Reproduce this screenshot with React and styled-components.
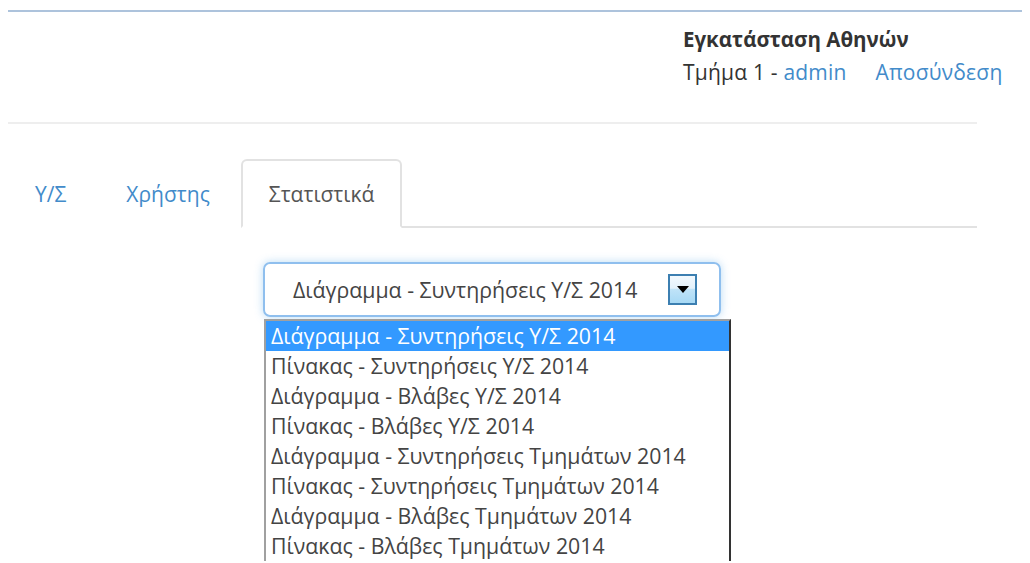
import React, { useState } from "react";
import styled, { createGlobalStyle } from "styled-components";

const GlobalStyle = createGlobalStyle`
  body {
    margin: 8px;
    background: #fff;
    color: #333;
    font-family: "Open Sans", "Noto Sans", sans-serif;
    overflow: hidden;
  }
`;

const Page = styled.div`
  width: 969px;
`;

const TopLine = styled.div`
  height: 2px;
  margin-top: 2px;
  width: 1022px;
  background: #adc3dc;
`;

const Header = styled.header`
  display: flex;
  justify-content: flex-end;
  padding: 11px 0 0 0;
  margin-right: -53px;
  height: 96px;
  box-sizing: border-box;
`;

const UserBox = styled.div`
  width: 347px;
  font-family: "Open Sans", sans-serif;
  font-size: 21px;
  line-height: 33px;
  letter-spacing: 0.2px;
`;

const Site = styled.div`
  font-weight: bold;
  font-size: 20.5px;
  letter-spacing: 0;
`;

const Link = styled.a`
  color: #428bca;
  text-decoration: none;
  margin-left: ${(p) => (p.$gap ? "29px" : "0")};
`;

const Rule = styled.hr`
  border: 0;
  border-top: 2px solid #eeeeee;
  margin: 14px 0 0 0;
`;

const TabBar = styled.ul`
  display: flex;
  list-style: none;
  margin: 35px 0 0 0;
  padding: 0;
  border-bottom: 2px solid #e2e2e2;
  height: 67px;
`;

const Tab = styled.li`
  box-sizing: border-box;
  height: 69px;
  padding: ${(p) => p.$pad};
  display: flex;
  align-items: center;
  font-size: 21px;
  color: ${(p) => (p.$active ? "#555" : "#428bca")};
  background: #fff;
  border: 2px solid ${(p) => (p.$active ? "#e2e2e2" : "transparent")};
  border-bottom-color: ${(p) => (p.$active ? "#fff" : "transparent")};
  border-radius: 6px 6px 0 0;
  cursor: pointer;
`;

const Stage = styled.div`
  display: flex;
  flex-direction: column;
  align-items: flex-start;
  padding: 34px 0 0 255px;
`;

const SelectBox = styled.div`
  box-sizing: border-box;
  width: 458px;
  height: 55px;
  display: flex;
  align-items: center;
  justify-content: space-between;
  padding: 0 22px 0 28px;
  border: 2px solid #8fbfee;
  border-radius: 7px;
  box-shadow: 0 0 8px rgba(102, 175, 233, 0.45);
  font-size: 21.3px;
  color: #444;
`;

const ArrowButton = styled.span`
  box-sizing: border-box;
  width: 29px;
  height: 31px;
  border: 2px solid #3c7fb1;
  background: linear-gradient(#f2f9fe 0%, #e3f1fb 45%, #bfe3f8 50%, #a7d9f5 100%);
  display: flex;
  align-items: center;
  justify-content: center;
`;

const Options = styled.ul`
  box-sizing: border-box;
  width: 467px;
  margin: 2px 0 0 1px;
  padding: 0;
  list-style: none;
  border: 2px solid #a0a0a0;
  border-right-color: #333;
  border-bottom: 0;
`;

const Option = styled.li`
  height: 30px;
  line-height: 30px;
  padding-left: 5px;
  font-size: 21.3px;
  color: ${(p) => (p.$selected ? "#fff" : "#444")};
  background: ${(p) => (p.$selected ? "#3399ff" : "#fff")};
  white-space: nowrap;
`;

const reports = [
  "Διάγραμμα - Συντηρήσεις Υ/Σ 2014",
  "Πίνακας - Συντηρήσεις Υ/Σ 2014",
  "Διάγραμμα - Βλάβες Υ/Σ 2014",
  "Πίνακας - Βλάβες Υ/Σ 2014",
  "Διάγραμμα - Συντηρήσεις Τμημάτων 2014",
  "Πίνακας - Συντηρήσεις Τμημάτων 2014",
  "Διάγραμμα - Βλάβες Τμημάτων 2014",
  "Πίνακας - Βλάβες Τμημάτων 2014",
];

const tabs = [
  { label: "Υ/Σ", pad: "0 25px" },
  { label: "Χρήστης", pad: "0 29px 0 31px" },
  { label: "Στατιστικά", pad: "0 26px" },
];

const App = () => {
  const [active, setActive] = useState(2);
  const [report, setReport] = useState(0);

  return (
    <Page>
      <GlobalStyle />
      <TopLine />
      <Header>
        <UserBox>
          <Site>Εγκατάσταση Αθηνών</Site>
          <div>
            Τμήμα 1 - <Link href="#">admin</Link>
            <Link href="#" $gap>Αποσύνδεση</Link>
          </div>
        </UserBox>
      </Header>
      <Rule />
      <TabBar>
        {tabs.map((t, i) => (
          <Tab key={t.label} $pad={t.pad} $active={i === active} onClick={() => setActive(i)}>
            {t.label}
          </Tab>
        ))}
      </TabBar>
      <Stage>
        <SelectBox>
          <span>{reports[report]}</span>
          <ArrowButton>
            <svg width="12" height="7" viewBox="0 0 12 7">
              <path d="M0 0h12L6 7z" fill="#000" />
            </svg>
          </ArrowButton>
        </SelectBox>
        <Options>
          {reports.map((r, i) => (
            <Option key={r} $selected={i === report} onClick={() => setReport(i)}>
              {r}
            </Option>
          ))}
        </Options>
      </Stage>
    </Page>
  );
};

export default App;
